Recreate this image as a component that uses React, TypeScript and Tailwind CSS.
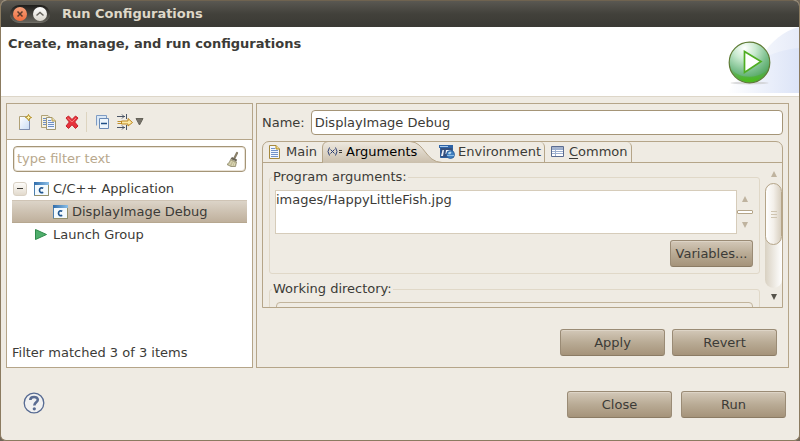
import React, { useState } from "react";

const pushButton =
  "h-[27px] rounded-[3px] border border-[#9a8b75] border-b-[#8b7b64] bg-linear-to-b from-[#d3c8b8] via-[#b9ab95] to-[#a5937a] text-center shadow-[inset_0_1px_0_#ddd4c6] hover:brightness-105";

function NewIcon() {
  return (
    <svg width="16" height="16" viewBox="0 0 16 16">
      <defs>
        <linearGradient id="page" x1="0" y1="0" x2="1" y2="1">
          <stop offset="0" stopColor="#fff" />
          <stop offset="1" stopColor="#c9dcf5" />
        </linearGradient>
      </defs>
      <path d="M2.500 2.500H12.500V15.500H2.500Z" fill="url(#page)" stroke="#b0a176" />
      <path d="M12.500 7V15.500H2.500" fill="none" stroke="#7f8fb0" />
      <path d="M11.500 .5L12.500 2.500L14.500 3.500L12.500 4.500L11.500 6.500L10.500 4.500L8.500 3.500L10.500 2.500Z" fill="#fff3a8" stroke="#b08a1c" />
    </svg>
  );
}

function CopyIcon() {
  return (
    <svg width="16" height="16" viewBox="0 0 16 16">
      <path d="M.5 1.500H7L9.500 4V13.500H.5Z" fill="#f4f0dd" stroke="#b0a176" />
      <path d="M2 4.500H5M2 6.500H5M2 8.500H5M2 10.500H5" stroke="#6f8fc4" />
      <path d="M5.500 3.500H11L14.500 7V15.500H5.500Z" fill="#eff5fd" stroke="#a2976f" />
      <path d="M11 3.500V7H14.500" fill="#e7dcae" stroke="#b59b4a" />
      <path d="M7 6.500H10M7 8.500H13M7 10.500H13M7 12.500H13" stroke="#6f8fc4" />
    </svg>
  );
}

function DeleteIcon() {
  return (
    <svg width="16" height="16" viewBox="0 0 16 16">
      <path
        d="M2 4L4.500 2L8 5.500L11.500 2L14 4L10.700 8L14 12L11.500 14.500L8 10.700L4.500 14.500L2 12L5.300 8Z"
        fill="#e8333c"
        stroke="#c3222c"
        strokeLinejoin="round"
      />
      <path d="M3.500 4L8 8L12 4" fill="none" stroke="#f57b7b" />
    </svg>
  );
}

function CollapseIcon() {
  return (
    <svg width="16" height="16" viewBox="0 0 16 16">
      <path d="M1.500 11.500V1.500H11.500V4" fill="#dbe8f5" stroke="#7f9cc4" />
      <path d="M4.500 4.500H13.500V14.500H4.500Z" fill="#eef6fc" stroke="#6b8ab5" />
      <path d="M6 9.500H12" stroke="#1f4f86" strokeWidth="1.500" />
    </svg>
  );
}

function FilterIcon() {
  return (
    <svg width="17" height="16" viewBox="0 0 17 16">
      <path d="M0 2.500H8M0 13.500H8M5 .5L7 2.500L5 4.500M5 11.500L7 13.500L5 15.500M9.500 0V5M9.500 11V16" fill="none" stroke="#4a5566" />
      <path d="M.5 7.500H4M.5 9.500H4" stroke="#c2912a" />
      <path d="M4.500 7H11V4.500L15.500 8.500L11 12V10H4.500Z" fill="#fbe9a5" stroke="#bd8720" />
    </svg>
  );
}

function AppIcon() {
  return (
    <svg width="16" height="14" viewBox="0 0 16 14" className="shrink-0">
      <defs>
        <linearGradient id="bar" x1="0" x2="1">
          <stop offset="0" stopColor="#2f6cab" />
          <stop offset="1" stopColor="#8cc0e8" />
        </linearGradient>
      </defs>
      <path d="M1.500 .5H15.500V13.500H1.500Z" fill="#f3fafe" stroke="#4b7fae" />
      <path d="M15.500 3V13.500H1.500" fill="none" stroke="#94906a" />
      <path d="M1 0H16V3H1Z" fill="url(#bar)" />
      <path d="M10.200 6.300C8.500 5.200 6.500 6 6.500 8.200C6.500 10.500 8.500 11.200 10.200 10.200" fill="none" stroke="#1f558f" strokeWidth="1.700" />
    </svg>
  );
}

function BroomIcon() {
  return (
    <svg width="14" height="17" viewBox="0 0 14 17" className="shrink-0">
      <path d="M11 2L8.500 7" stroke="#8a806a" strokeWidth="2.200" strokeLinecap="round" />
      <path d="M6 6L11 8.500L10.500 10.500L4.500 8Z" fill="#6b6556" />
      <path d="M4.500 8.500L10.500 11L9.500 15.500H5L1 13.500C3 12 4 10.500 4.500 8.500Z" fill="#c0bb96" stroke="#8d886a" strokeWidth=".8" />
      <path d="M5.500 10L3.500 14M7.500 11L6 15M9 12L8 15" stroke="#e6e2c2" strokeWidth=".8" />
    </svg>
  );
}

function PageIcon() {
  return (
    <svg width="13" height="14" viewBox="0 0 13 14" className="shrink-0">
      <path d="M1.500 .5H8L11.500 4V13.500H1.500Z" fill="#f2f7fd" stroke="#a6893e" />
      <path d="M8 .5V4H11.500" fill="#f3dc8c" stroke="#b08a1c" />
      <path d="M3 3.500H7M3 5.500H10M3 7.500H10M3 9.500H10M3 11.500H10" stroke="#7292c9" />
    </svg>
  );
}

function VariableIcon() {
  return (
    <svg width="16" height="10" viewBox="0 0 16 10" className="shrink-0">
      <path d="M2.500 .5Q-.5 4.500 2.500 8.500M8.500 .5Q11.500 4.500 8.500 8.500M3.500 2.500L7.500 6.500M7.500 2.500L3.500 6.500" fill="none" stroke="#2b3f74" />
      <path d="M12 3.500H15M12 5.500H15" stroke="#3c3b37" />
    </svg>
  );
}

function EnvironmentIcon() {
  return (
    <svg width="16" height="14" viewBox="0 0 16 14" className="shrink-0">
      <path d="M1.500 .5H13.500V12.500H1.500Z" fill="#35507e" stroke="#2d5f9e" />
      <path d="M0 0H14V3H0Z" fill="#2e63a6" />
      <path d="M1 1.500H9" stroke="#a9cbee" />
      <path d="M2 11L3.500 5H5L4 11ZM7 5H12V6H9L7.500 9H6.500Z" fill="#eef3fa" />
      <circle cx="11.500" cy="9.500" r="4" fill="#3f7fc0" stroke="#2a5a94" strokeWidth=".8" />
      <path d="M9 8Q10.500 6 12.500 7L11.500 9Q9.500 10 9 8Z" fill="#b5d8ee" />
      <path d="M8 10.500H15" stroke="#8ebce3" />
    </svg>
  );
}

function TableIcon() {
  return (
    <svg width="13" height="12" viewBox="0 0 13 12" className="shrink-0">
      <path d="M.5 .5H12.500V10.500H.5Z" fill="#fff" stroke="#5b6c90" />
      <path d="M1 1H12V3H1Z" fill="#a5b3cd" />
      <path d="M1 3.500H12M1 5.500H12M1 7.500H12M4.500 1V10" stroke="#9db0d0" />
    </svg>
  );
}

function RunBanner() {
  return (
    <svg width="79" height="69" viewBox="0 0 79 69" className="shrink-0" role="img" aria-label="Run">
      <defs>
        <linearGradient id="sky" x1="0" x2="1">
          <stop offset="0" stopColor="#fff" />
          <stop offset=".5" stopColor="#edf1fb" />
          <stop offset="1" stopColor="#dce4f7" />
        </linearGradient>
        <linearGradient id="sky2" x1="0" x2="1">
          <stop offset="0" stopColor="#f6f8fd" />
          <stop offset="1" stopColor="#e6ebf8" />
        </linearGradient>
        <radialGradient id="ball" cx=".38" cy=".15" r=".9">
          <stop offset="0" stopColor="#fff" />
          <stop offset=".3" stopColor="#c9ead0" />
          <stop offset=".65" stopColor="#79be8b" />
          <stop offset="1" stopColor="#3f9a4b" />
        </radialGradient>
        <linearGradient id="glow" x1="0" y1="0" x2="0" y2="1">
          <stop offset="0" stopColor="#4aa53a" stopOpacity="0" />
          <stop offset="1" stopColor="#4cc012" />
        </linearGradient>
      </defs>
      <path d="M36 42C44 20 60 5 79 0V66H36Z" fill="url(#sky2)" />
      <path d="M7 66C24 40 46 24 79 21V66Z" fill="url(#sky)" />
      <ellipse cx="29.500" cy="56" rx="19" ry="1.500" fill="#c4c4c4" opacity=".6" />
      <circle cx="29.500" cy="35.500" r="20.300" fill="url(#ball)" stroke="#5f7b35" strokeWidth="1.200" />
      <path d="M10.500 40A19.500 19.500 0 0 0 48.500 40C42 53 17 53 10.500 40Z" fill="url(#glow)" />
      <path d="M24.500 24.500L41 34.500L24.500 45.500Z" fill="#fff" stroke="#4fae22" strokeWidth="1.700" />
    </svg>
  );
}

function Triangle({ down = false, dark = false }: { down?: boolean; dark?: boolean }) {
  return (
    <svg width="6" height="6" viewBox="0 0 6 6">
      <path d={down ? "M0 0H6L3 6Z" : "M3 0L6 6H0Z"} fill={dark ? "#56534b" : "#bfb39f"} />
    </svg>
  );
}

function TitleBar() {
  return (
    <header className="flex h-[27px] shrink-0 items-center gap-3 rounded-t-md border-t border-[#6f6350] bg-linear-to-b from-[#5a5852] via-[#42413b] to-[#3a3934] pl-[9px]">
      <div className="flex h-[18px] w-10 items-center justify-between rounded-full border-b border-[#6f6d66] bg-linear-to-b from-[#1f1e1b] to-[#65635c] px-[3px]">
        <button aria-label="Close window" className="size-[14px] rounded-full bg-linear-to-b from-[#f5a07a] to-[#ef6c3c]">
          <svg viewBox="0 0 14 14" className="size-[14px]">
            <path d="M4.500 4.500L9.500 9.500M9.500 4.500L4.500 9.500" stroke="#5a3a2b" strokeWidth="1.500" />
          </svg>
        </button>
        <button aria-label="Maximize window" className="size-[14px] rounded-full bg-linear-to-b from-white to-[#d8d4cb]">
          <svg viewBox="0 0 14 14" className="size-[14px]">
            <path d="M3.500 8.500L7 5.500L10.500 8.500" fill="none" stroke="#66635c" strokeWidth="1.500" />
          </svg>
        </button>
      </div>
      <h1 className="font-bold text-[#dfd8c8]">Run Configurations</h1>
    </header>
  );
}

function LaunchList() {
  return (
    <section className="flex w-[247px] shrink-0 flex-col border border-[#b5a589] bg-white">
      <div role="toolbar" aria-label="Configurations" className="flex h-9 items-center border-b border-[#b5a589] bg-[#efebe3] pl-[10px]">
        <button aria-label="New"><NewIcon /></button>
        <button aria-label="Duplicate" className="ml-2"><CopyIcon /></button>
        <button aria-label="Delete" className="ml-[7px]"><DeleteIcon /></button>
        <span className="ml-[6px] h-5 border-l border-[#ddd4c0]" />
        <button aria-label="Collapse all" className="ml-2"><CollapseIcon /></button>
        <button aria-label="Filter" className="ml-[6px] flex items-center gap-px">
          <FilterIcon />
          <svg width="9" height="8" viewBox="0 0 9 8">
            <path d="M1 .5H8L4.500 7Z" fill="#77736a" stroke="#66635a" />
          </svg>
        </button>
      </div>
      <div className="flex flex-1 flex-col px-[5px] pt-[6px]">
        <div className="mx-px flex h-[26px] items-center rounded-[4px] border border-[#a59577] pr-[5px] pl-[3px] shadow-[inset_0_0_0_1px_#e9e2d6]">
          <input aria-label="Filter" placeholder="type filter text" className="w-full min-w-0 flex-1 bg-transparent outline-none placeholder:text-[#b8a88d]" />
          <button aria-label="Clear filter"><BroomIcon /></button>
        </div>
        <ul role="tree" aria-label="Launch configurations" className="mt-[5px]">
          <li role="treeitem" aria-expanded="true" aria-selected="false">
            <div className="flex h-[23px] items-center gap-1 pl-px">
              <button aria-label="Collapse C/C++ Application" className="mr-[2px] flex size-[14px] items-center justify-center rounded-[3px] border border-[#d9d1c4] bg-linear-to-b from-[#fdfcfa] to-[#e2dacd]">
                <span className="h-px w-[6px] bg-[#3c3b37]" />
              </button>
              <AppIcon />
              C/C++ Application
            </div>
            <ul role="group">
              <li role="treeitem" aria-selected="true" className="flex h-[23px] items-center gap-1 border-y border-t-[#cfc4b5] border-b-[#b6a790] bg-linear-to-b from-[#dcd4c8] to-[#bfb09c] pl-10">
                <AppIcon />
                DisplayImage Debug
              </li>
            </ul>
          </li>
          <li role="treeitem" aria-selected="false" className="flex h-[23px] items-center gap-[6px] pl-[23px]">
            <svg width="12" height="11" viewBox="0 0 12 11">
              <path d="M.5 .5L11.500 5.500L.5 10.500Z" fill="#4fae6c" stroke="#2f8a4b" />
            </svg>
            Launch Group
          </li>
        </ul>
        <p className="mt-auto pb-[5px]">Filter matched 3 of 3 items</p>
      </div>
    </section>
  );
}

function Tabs() {
  return (
    <div role="tablist" className="flex h-[21px] items-stretch border-b border-[#b5a589]">
      <button role="tab" aria-selected="false" className="flex w-[59px] items-center gap-[5px] pl-[5px]">
        <PageIcon />
        Main
      </button>
      <button role="tab" aria-selected="true" className="relative flex w-[117px] items-center gap-[3px] pl-[5px] text-black">
        <svg width="126" height="21" viewBox="0 0 126 21" className="absolute top-0 left-0">
          <defs>
            <linearGradient id="tab" x1="0" y1="0" x2="0" y2="1">
              <stop offset="0" stopColor="#eee9e0" />
              <stop offset="1" stopColor="#cbbfac" />
            </linearGradient>
          </defs>
          <path d="M.5 21V5Q1 0 6 -.5H88C103 0 103 20 120 20.500V21Z" fill="url(#tab)" />
          <path d="M.5 21V5Q1 0 6 -.5M88 -.5C103 0 103 20 120 20.500" fill="none" stroke="#b5a589" />
        </svg>
        <span className="relative"><VariableIcon /></span>
        <span className="relative">Arguments</span>
      </button>
      <button role="tab" aria-selected="false" className="flex w-[106px] items-center gap-[3px] rounded-tr-[5px] border-r border-[#b5a589]">
        <EnvironmentIcon />
        Environment
      </button>
      <button role="tab" aria-selected="false" className="flex w-[87px] items-center gap-[5px] rounded-tr-[5px] border-r border-[#b5a589] pl-[6px]">
        <TableIcon />
        <span><u className="underline-offset-2">C</u>ommon</span>
      </button>
    </div>
  );
}

function ScrollThumbGrip() {
  return <span className="h-[7px] w-[6px] border-y border-[#cfc4b0] bg-[linear-gradient(#cfc4b0,#cfc4b0)] bg-[length:100%_1px] bg-center bg-no-repeat" />;
}

function ConfigurationEditor() {
  const [name, setName] = useState("DisplayImage Debug");
  const [args, setArgs] = useState("images/HappyLittleFish.jpg");
  return (
    <section className="flex min-w-0 flex-1 flex-col border border-[#b5a589] px-[5px] pt-[6px] pb-[11px]">
      <div className="flex items-center gap-[6px]">
        <label htmlFor="name">Name:</label>
        <input
          id="name"
          value={name}
          onChange={(e) => setName(e.target.value)}
          className="h-[25px] min-w-0 flex-1 rounded-[4px] border border-[#a59577] bg-white px-[3px] outline-none"
        />
      </div>
      <div className="mt-[6px] rounded-t-[7px] border border-[#b5a589]">
        <Tabs />
        <div className="flex h-36 overflow-hidden">
          <div className="min-w-0 flex-1 pr-[5px] pl-[6px] pt-[5px]">
            <fieldset className="min-w-0 rounded-[3px] border border-[#e0d8c8] pr-[6px] pb-[6px] pl-[5px]">
              <legend className="-ml-[3px] h-[18px] px-px">Program arguments:</legend>
              <div className="mt-1 flex">
                <textarea
                  aria-label="Program arguments"
                  value={args}
                  onChange={(e) => setArgs(e.target.value)}
                  className="block h-[44px] min-w-0 flex-1 resize-none border border-[#d6ccba] bg-white outline-none"
                />
                <div className="flex w-4 flex-col items-center justify-between py-[6px]">
                  <Triangle />
                  <span className="h-1 w-4 rounded-[1px] border border-[#b5a589] bg-white" />
                  <Triangle down />
                </div>
              </div>
              <div className="mt-[6px] flex justify-end">
                <button className={pushButton + " w-[83px]"}>Variables...</button>
              </div>
            </fieldset>
            <fieldset className="mt-[6px] min-w-0 rounded-[3px] border border-[#e0d8c8] px-[6px] pb-[6px]">
              <legend className="-ml-1 h-[18px] px-px">Working directory:</legend>
              <input aria-label="Working directory" className="mt-1 block h-[26px] w-full rounded-[4px] border border-[#c2b49c] bg-[#efebe3]" />
            </fieldset>
          </div>
          <div className="flex w-[17px] shrink-0 flex-col items-center pt-2 pb-[7px]">
            <Triangle />
            <div className="my-[6px] w-[17px] flex-1 rounded-full bg-linear-to-r from-[#d9d1c2] to-white">
              <div className="flex h-[62px] items-center justify-center rounded-full border border-[#b5a589] bg-linear-to-r from-white via-[#f3efe9] to-[#d8cfc0]">
                <ScrollThumbGrip />
              </div>
            </div>
            <Triangle down dark />
          </div>
        </div>
      </div>
      <div className="mt-[21px] flex justify-end gap-[7px] pr-[6px]">
        <button className={pushButton + " w-[105px]"}>Apply</button>
        <button className={pushButton + " w-[105px]"}>Revert</button>
      </div>
    </section>
  );
}

export default function App() {
  return (
    <div className="bg-[#6f6557] font-['DejaVu_Sans',sans-serif] text-[13px] leading-[18px] text-[#3c3b37]">
      <div className="flex min-h-screen flex-col rounded-md border-x border-b border-[#8b7b60] bg-[#efebe3]">
        <TitleBar />
        <div className="flex h-[70px] shrink-0 justify-between border-b border-[#ddd6c8] bg-white pl-[7px]">
          <h2 className="pt-2 font-bold">Create, manage, and run configurations</h2>
          <RunBanner />
        </div>
        <main className="flex flex-1 gap-[3px] pt-[6px] pr-[10px] pl-[5px]">
          <LaunchList />
          <ConfigurationEditor />
        </main>
        <footer className="flex items-start justify-between pt-[23px] pr-[13px] pb-[22px] pl-[22px]">
          <button aria-label="Help" className="pt-px">
            <svg width="22" height="22" viewBox="0 0 22 22">
              <circle cx="11" cy="11" r="9.800" fill="#f1f1f1" stroke="#566a92" strokeWidth="1.300" />
              <path d="M7.300 8C7.300 4 14.800 4 14.800 7.800C14.800 10.300 11.300 10.300 11.300 13.500" fill="none" stroke="#5a6c92" strokeWidth="2.600" />
              <circle cx="11.300" cy="16.800" r="1.600" fill="#5a6c92" />
            </svg>
          </button>
          <div className="flex gap-[9px]">
            <button className={pushButton + " w-[105px]"}>Close</button>
            <button className={pushButton + " w-[105px]"}>Run</button>
          </div>
        </footer>
      </div>
    </div>
  );
}
